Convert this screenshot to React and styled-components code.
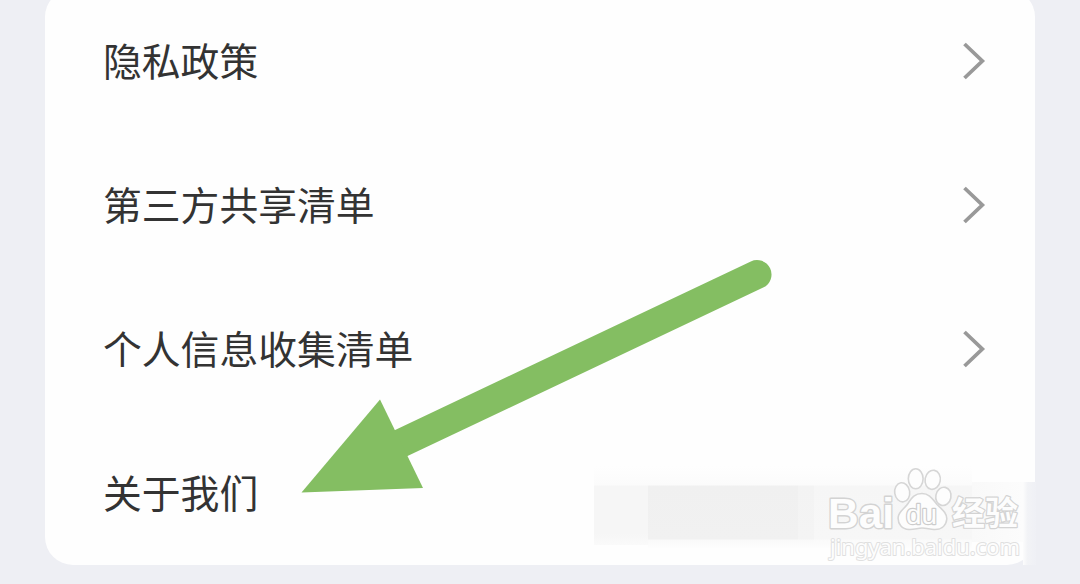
import React from 'react';
import styled, { createGlobalStyle } from 'styled-components';

const GlobalStyle = createGlobalStyle`
  body {
    margin: 0;
    overflow: hidden;
    background-color: #eeeff4;
    font-family: 'Noto Sans CJK SC', sans-serif;
  }
`;

const Page = styled.div`
  position: relative;
  box-sizing: border-box;
  height: 584px;
  padding: 0 45px;
  overflow: hidden;
`;

const Card = styled.div`
  height: 576px;
  margin-top: -11px;
  background-color: #fefefe;
  border-radius: 28px;
`;

const Row = styled.div`
  box-sizing: border-box;
  height: 144px;
  padding: 0 49px 0 58px;
  display: flex;
  align-items: center;
  justify-content: space-between;
`;

const Label = styled.span`
  padding-bottom: 4px;
  font-size: 38.8px;
  line-height: 56px;
  color: #333333;
`;

const ChevronIcon = styled.svg`
  width: 24px;
  height: 40px;
  fill: none;
  stroke: #999999;
  stroke-width: 3.8;
`;

const Overlay = styled.svg`
  position: absolute;
  left: 0;
  top: 0;
  width: 1080px;
  height: 584px;
`;

// blurred strip that hides the value of the last row
const HiddenValue = styled.div`
  position: absolute;
  right: 44px;
  bottom: 19px;
  display: flex;
  align-items: flex-start;
`;

const Patch = styled.div`
  width: ${props => props.$width}px;
  height: ${props => props.$height}px;
  margin-top: ${props => props.$offset || 0}px;
  background: ${props => props.$fill};
`;

const MarkText = styled.text`
  font-family: ${props => props.$font || "'Liberation Sans'"}, sans-serif;
  font-size: ${props => props.$size}px;
  font-weight: ${props => props.$weight || 700};
  fill: ${props => props.$fill || '#fdfdfd'};
  stroke: ${props => props.$stroke || '#d3d3d3'};
  stroke-width: ${props => props.$line || 2.4};
  stroke-linejoin: round;
  paint-order: stroke;
`;

const items = ['隐私政策', '第三方共享清单', '个人信息收集清单', '关于我们'];

const Chevron = () => (
  <ChevronIcon viewBox="0 0 24 40">
    <path d="M2.5 3 L20.3 20 L2.5 37" />
  </ChevronIcon>
);

const Arrow = () => (
  <Overlay viewBox="0 0 1080 584">
    <path d="M757 274.5 L395 446" stroke="#84be62" strokeWidth="29" strokeLinecap="round" />
    <path d="M301.5 492.5 L380 399.5 L423 488 Z" fill="#84be62" />
  </Overlay>
);

const Watermark = () => (
  <Overlay viewBox="0 0 1080 584">
    <MarkText x="828" y="527.5" $size={43} textLength="66" lengthAdjust="spacingAndGlyphs" $line={2.8}>Bai</MarkText>
    <g fill="#fdfdfd" stroke="#d6d6d6" strokeWidth="1.6">
      <ellipse cx="915.7" cy="478.8" rx="7.4" ry="10" />
      <ellipse cx="932.7" cy="479.8" rx="7.6" ry="9.6" transform="rotate(10 932.7 479.8)" />
      <ellipse cx="902.2" cy="492.3" rx="7.5" ry="9.6" transform="rotate(-8 902.2 492.3)" />
      <ellipse cx="943.4" cy="496.4" rx="7.6" ry="9.2" transform="rotate(12 943.4 496.4)" />
      <path d="M922 493.5 C930 493.5 933 500 937 504.5 C942 509.5 947 513 946.8 519 C946 527 940 529.8 934 529.5 C929 529 926 528 922 528 C918 528 914 529.8 909 529.5 C902 529 897.5 524 898.2 517 C899 511 904.5 509 908 503.5 C912 497 915 493.5 922 493.5 Z" />
    </g>
    <MarkText x="906" y="523.5" $size={28} textLength="31" lengthAdjust="spacingAndGlyphs" $weight={400} $line={2.4} $stroke="#cccccc">du</MarkText>
    <MarkText x="952" y="524.5" $size={33} textLength="66" $line={2.4} $font="'Noto Sans CJK SC'">经验</MarkText>
    <MarkText x="830" y="554.5" $size={22.5} textLength="190" lengthAdjust="spacingAndGlyphs" $weight={400} $font="'Noto Sans'" $stroke="#e0e0e0" $line={2}>
      jingyan.baidu.com
    </MarkText>
  </Overlay>
);

const App = () => (
  <>
    <GlobalStyle />
    <Page>
      <Card>
        {items.map((item, index) => (
          <Row key={item}>
            <Label>{item}</Label>
            {index < 3 && <Chevron />}
          </Row>
        ))}
      </Card>
      <HiddenValue>
        <Patch $width={54} $height={79} $fill="linear-gradient(#fefefe, #fbfbfb 19px, #f6f6f6 20px, #f6f6f6 68px, #fafafa)" />
        <Patch $width={150} $height={82} $fill="linear-gradient(#fefefe, #fbfbfb 19px, #f0f0f0 20px, #f1f1f1 73px, #f9f9f9 74px, #fdfdfd)" />
        <Patch $width={16} $height={82} $fill="linear-gradient(#fefefe, #fbfbfb 19px, #f3f3f3 20px, #f4f4f4 73px, #f9f9f9 74px, #fdfdfd)" />
        <Patch $width={158} $height={82} $fill="linear-gradient(#fefefe, #fbfbfb 19px, #f6f6f6 20px, #f7f7f7 73px, #fafafa 74px, #fdfdfd)" />
        <Patch $width={51} $height={60} $offset={16} $fill="linear-gradient(90deg, #f9f9f9, #fcfcfc)" />
        <Patch $width={13} $height={83} $offset={16} $fill="linear-gradient(90deg, #fcfcfc, #f2f3f6 35%, #eff0f5)" />
      </HiddenValue>
      <Arrow />
      <Watermark />
    </Page>
  </>
);

export default App;
